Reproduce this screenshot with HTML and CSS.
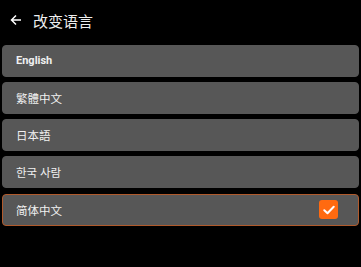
FILE: index.html
```html
<!DOCTYPE html>
<html lang="zh">
<head>
<meta charset="utf-8">
<link rel="stylesheet" href="styles.css">
</head>
<body>
<div class="page">
  <header class="header">
    <svg class="back" width="12" height="12" viewBox="0 0 12 12"><path d="M11 6H1.5M6 1.5L1.5 6L6 10.5" fill="none" stroke="#fff" stroke-width="1.5"/></svg>
    <span class="title">改变语言</span>
  </header>
  <div class="list">
    <div class="row"><span class="label en">English</span></div>
    <div class="row"><span class="label">繁體中文</span></div>
    <div class="row"><span class="label">日本語</span></div>
    <div class="row"><span class="label">한국 사람</span></div>
    <div class="row selected"><span class="label">简体中文</span>
      <span class="check"><svg width="12" height="10" viewBox="0 0 12 10"><path d="M1.3 5.2L4.5 8.2L10.7 1.8" fill="none" stroke="#fff" stroke-width="2" stroke-linecap="round" stroke-linejoin="round"/></svg></span>
    </div>
  </div>
</div>
</body>
</html>
```
FILE: styles.css
```css
html, body { margin: 0; padding: 0; background: #000; }
body { width: 361px; height: 267px; overflow: hidden; font-family: Roboto, "Noto Sans CJK SC", sans-serif; color: #fff; }
.header { display: flex; align-items: center; height: 40px; padding-left: 10px; box-sizing: border-box; }
.back { margin-right: 11px; }
.title { font-size: 15px; color: #eee; }
.list { display: flex; flex-direction: column; gap: 5.3px; padding: 4.5px 2px 0; }
.row { display: flex; align-items: center; justify-content: space-between; box-sizing: border-box; height: 32px; padding: 0 20px 0 13px; background: #575757; border: 1px solid #575757; border-radius: 4px; }
.row.selected { border-color: #b05a2c; }
.label { font-size: 11.5px; color: #f0f0f0; }
.label.en { font-weight: bold; font-size: 11px; }
.check { display: flex; align-items: center; justify-content: center; width: 19px; height: 19px; background: #ff6a10; border-radius: 3px; }
```
